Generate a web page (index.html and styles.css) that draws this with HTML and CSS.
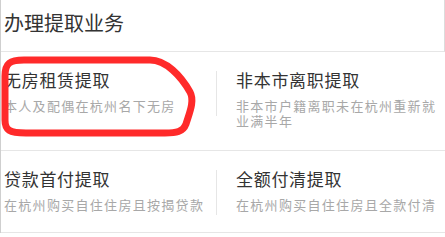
FILE: index.html
```html
<!DOCTYPE html>
<html lang="zh-CN">
<head>
    <meta charset="UTF-8">
    <meta name="viewport" content="width=device-width, initial-scale=1.0">
    <title>办理提取业务</title>
    <link rel="stylesheet" href="styles.css">
</head>
<body>
    <div class="panel">
        <div class="panel-title">办理提取业务</div>

        <div class="row row-first">
            <div class="item item-left">
                <h3>无房租赁提取</h3>
                <p>本人及配偶在杭州名下无房</p>
            </div>
            <span class="divider"></span>
            <div class="item item-right">
                <h3>非本市离职提取</h3>
                <p>非本市户籍离职未在杭州重新就业满半年</p>
            </div>
        </div>

        <div class="row">
            <div class="item item-left">
                <h3>贷款首付提取</h3>
                <p>在杭州购买自住住房且按揭贷款</p>
            </div>
            <span class="divider"></span>
            <div class="item item-right">
                <h3>全额付清提取</h3>
                <p>在杭州购买自住住房且全款付清</p>
            </div>
        </div>

        <!-- hand-drawn marker around the first item -->
        <svg class="marker" width="200" height="90" viewBox="0 52 200 90">
            <path d="M5,76 C5,63 10,60 24,60 L150,60 C166,60 181,76 190,92 C195,101 189,114 186,124 C183,132 176,133 165,133 L26,133 C9,133 5,130 5,120 Z"
                  fill="none" stroke="#ff2a2a" stroke-width="7" stroke-linejoin="round"/>
        </svg>
    </div>
</body>
</html>
```

FILE: styles.css
```css
body {
    margin: 0;
    background: #fff;
    font-family: "Noto Sans CJK SC", "Noto Sans", sans-serif;
}
.panel {
    position: relative;
    width: 444px;
    border-left: 1px solid #cfcfcf;
}
.panel-title {
    height: 51px;
    padding-left: 3px;
    line-height: 46px;
    font-size: 20px;
    color: #333;
    border-right: 1px solid #dcdcdc;
    border-bottom: 1px solid #e6e6e6;
}
.row {
    display: flex;
    border-bottom: 1px solid #e6e6e6;
    padding: 17px 0 17px;
}
.row-first {
    padding-bottom: 22px;
}
.item h3 {
    margin: 0;
    font-size: 17px;
    font-weight: normal;
    line-height: 22px;
    letter-spacing: 0.7px;
    color: #333;
}
.item p {
    margin: 7px 0 0;
    font-size: 13px;
    line-height: 15px;
    letter-spacing: 1.3px;
    color: #a8a8a8;
}
.item-left {
    width: 212px;
    padding-left: 3px;
    flex-shrink: 0;
}
.item-right {
    flex: 1;
    padding: 0 4px 0 19px;
}
.divider {
    width: 1px;
    height: 45px;
    margin-top: 2px;
    background: #e6e6e6;
    flex-shrink: 0;
}
.marker {
    position: absolute;
    left: -1px;
    top: 52px;
    pointer-events: none;
}
```
